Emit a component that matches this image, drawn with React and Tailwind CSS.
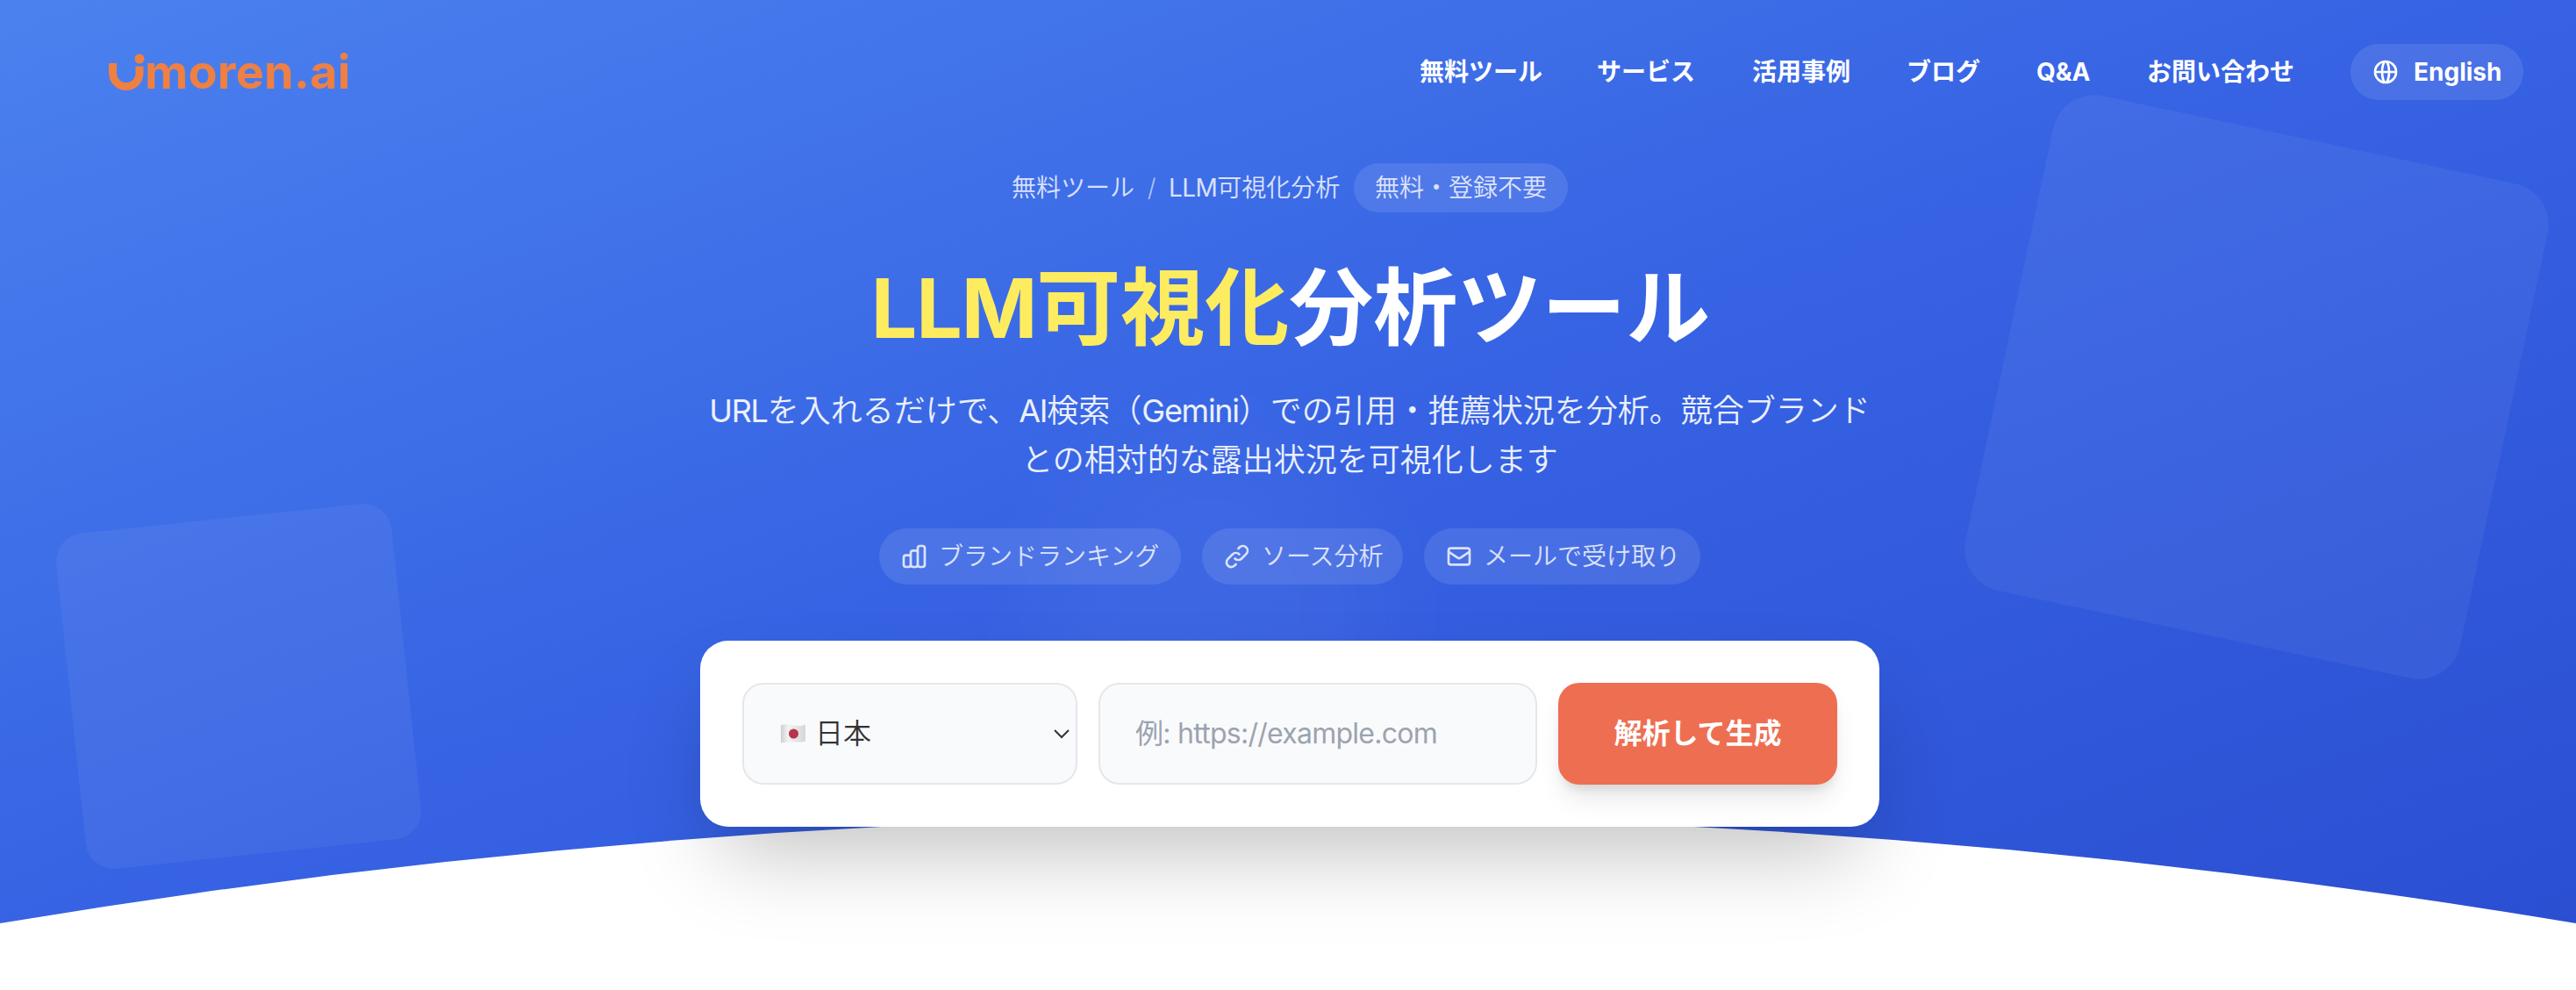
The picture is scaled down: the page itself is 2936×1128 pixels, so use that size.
const NAV_ITEMS = [
  { label: '無料ツール', width: 'w-[138px]' },
  { label: 'サービス', width: 'w-[113px]' },
  { label: '活用事例', width: 'w-[112px]' },
  { label: 'ブログ', width: 'w-[84px]' },
  { label: 'Q&A', width: 'w-[62px]' },
  { label: 'お問い合わせ', width: 'w-[168px]' },
];

const ICONS = {
  globe:
    'M21 12a9 9 0 01-9 9m9-9a9 9 0 00-9-9m9 9H3m9 9a9 9 0 01-9-9m9 9c1.657 0 3-4.03 3-9s-1.343-9-3-9m0 18c-1.657 0-3-4.03-3-9s1.343-9 3-9m-9 9a9 9 0 019-9',
  chart:
    'M9 19v-6a2 2 0 00-2-2H5a2 2 0 00-2 2v6a2 2 0 002 2h2a2 2 0 002-2zm0 0V9a2 2 0 012-2h2a2 2 0 012 2v10m-6 0a2 2 0 002 2h2a2 2 0 002-2m0 0V5a2 2 0 012-2h2a2 2 0 012 2v14a2 2 0 01-2 2h-2a2 2 0 01-2-2z',
  link: 'M13.828 10.172a4 4 0 00-5.656 0l-4 4a4 4 0 105.656 5.656l1.102-1.101m-.758-4.899a4 4 0 005.656 0l4-4a4 4 0 00-5.656-5.656l-1.1 1.1',
  mail: 'M3 8l7.89 5.26a2 2 0 002.22 0L21 8M5 19h14a2 2 0 002-2V7a2 2 0 00-2-2H5a2 2 0 00-2 2v10a2 2 0 002 2z',
};

const FEATURES = [
  { label: 'ブランドランキング', icon: 'chart', width: 'w-[344px]' },
  { label: 'ソース分析', icon: 'link', width: 'w-[229px]' },
  { label: 'メールで受け取り', icon: 'mail', width: 'w-[315px]' },
];

function Icon({ name }) {
  return (
    <svg
      viewBox="0 0 24 24"
      className="size-8 shrink-0"
      fill="none"
      stroke="currentColor"
      strokeWidth="2"
      strokeLinecap="round"
      strokeLinejoin="round"
    >
      <path d={ICONS[name]} />
    </svg>
  );
}

function Logo() {
  return (
    <a href="#" className="flex items-start text-[#ee8043]" aria-label="umoren.ai">
      <svg width="44" height="44" viewBox="0 0 44 44" fill="none" className="shrink-0">
        <path d="M4.500 12V23.300a15.250 15.250 0 0 0 30.500 0V15.500" stroke="currentColor" strokeWidth="9" />
        <circle cx="35" cy="7" r="5.500" fill="currentColor" />
      </svg>
      <span className="-ml-[3px] text-[54px] leading-[44px] font-bold tracking-[0.004em] whitespace-nowrap">
        moren.ai
      </span>
    </a>
  );
}

function Header() {
  return (
    <header className="flex h-[64px] items-center justify-between pr-[60px] pl-[124px]">
      <Logo />
      <nav className="flex items-center gap-16 text-[28px] font-bold">
        {NAV_ITEMS.map((item) => (
          <a key={item.label} href="#" className={`${item.width} whitespace-nowrap`}>
            {item.label}
          </a>
        ))}
        <button className="flex h-[64px] w-[197px] items-center gap-4 rounded-full bg-white/10 px-6">
          <Icon name="globe" />
          <span>English</span>
        </button>
      </nav>
    </header>
  );
}

function Breadcrumb() {
  return (
    <div className="flex items-center text-[28px] font-[350] text-white/80">
      <span className="w-[140px] whitespace-nowrap">無料ツール</span>
      <span className="w-[39px] text-center text-white/60">/</span>
      <span className="w-[195px] whitespace-nowrap">
        <span className="font-normal tracking-[-0.02em]">LLM</span>可視化分析
      </span>
      <span className="ml-4 flex h-14 w-[244px] items-center justify-center rounded-full bg-white/10 whitespace-nowrap">
        無料・登録不要
      </span>
    </div>
  );
}

function JapanFlag() {
  return (
    <svg width="30" height="24" viewBox="0 0 30 24" className="shrink-0">
      <defs>
        <linearGradient id="cloth" x1="0" x2="1" y1="0" y2="0">
          <stop offset="0" stopColor="#cfcfcf" />
          <stop offset="0.300" stopColor="#f3f3f3" />
          <stop offset="0.650" stopColor="#e4e4e4" />
          <stop offset="1" stopColor="#d6d6d6" />
        </linearGradient>
      </defs>
      <path d="M1 2C6 .500 10 1.500 15 2.500S25 3 29 1.500V20.500C25 22 20 21.500 15 21.500S6 21.500 1 22.500Z" fill="url(#cloth)" />
      <circle cx="15.500" cy="12" r="5.500" fill="#b8334c" />
    </svg>
  );
}

function SearchCard() {
  return (
    <form className="flex h-[212px] w-[1344px] gap-6 rounded-[32px] bg-white p-12 text-[32px] shadow-[0_50px_100px_-24px_rgba(0,0,0,0.25)]">
      <button
        type="button"
        className="flex w-[382px] items-center rounded-3xl border-2 border-[#e5e7eb] bg-[#f9fafc] pr-1.5 pl-[41px] font-[350] text-[#333]"
      >
        <JapanFlag />
        <span className="ml-2.5 flex-1 text-left">日本</span>
        <svg width="20" height="12" viewBox="0 0 20 12" fill="none" stroke="#333" strokeWidth="2">
          <path d="M2 2l8 8 8-8" />
        </svg>
      </button>
      <input
        type="text"
        placeholder="例: https://example.com"
        className="w-[500px] rounded-3xl border-2 border-[#e5e7eb] bg-[#f9fafc] px-10 tracking-[-0.023em] placeholder:text-[#9ca3af]"
      />
      <button
        type="button"
        className="flex-1 rounded-3xl bg-[#ee6e52] font-bold whitespace-nowrap text-white shadow-[0_20px_30px_-6px_rgba(0,0,0,0.1),0_8px_12px_-4px_rgba(0,0,0,0.1)]"
      >
        解析して生成
      </button>
    </form>
  );
}

export default function App() {
  return (
    <div className="h-[1128px] w-[2936px] overflow-hidden bg-white font-[Inter,'Noto_Sans_CJK_JP',sans-serif]" lang="ja">
      <section className="relative h-[1092px] bg-linear-to-br/srgb from-[#4b81ef] via-[#3662e3] to-[#2b4ed1] pt-[50px] text-white">
        {/* Decorative shapes */}
        <div className="absolute top-[153px] left-[2284px] size-[576px] rotate-12 rounded-[48px] bg-white/5" />
        <div className="absolute top-[590px] left-[80px] size-[384px] -rotate-6 rounded-[32px] bg-white/5" />
        <div className="absolute top-[500px] left-[1180px] size-[400px] rounded-full bg-white/4 blur-[60px]" />

        {/* Curved bottom edge */}
        <svg
          className="absolute bottom-0 left-0 h-[163px] w-full"
          viewBox="0 0 2936 163"
          preserveAspectRatio="none"
          fill="#fff"
        >
          <path d="M0 123Q1468-121.300 2936 123V163H0Z" />
        </svg>

        <div className="relative">
          <Header />
          <main className="mt-[72px] flex flex-col items-center pl-1">
            <Breadcrumb />
            <h1 className="mt-[48px] ml-0.5 h-[120px] text-[96px] leading-[120px] font-bold whitespace-nowrap">
              <span className="text-[#fdec5f]">
                <span className="text-[93px] tracking-[-0.012em]">LLM</span>可視化
              </span>
              分析ツール
            </h1>
            <p className="mt-[30px] h-[112px] text-center text-[36px] leading-[56px] font-[350] whitespace-nowrap text-white/90">
              <span className="font-normal tracking-[-0.035em]">URL</span>を入れるだけで、
              <span className="font-normal tracking-[-0.035em]">AI</span>検索（
              <span className="font-normal tracking-[-0.035em]">Gemini</span>
              ）での引用・推薦状況を分析。競合ブランド
              <br />
              との相対的な露出状況を可視化します
            </p>
            <div className="mt-[50px] mb-16 flex gap-6 text-[28px] font-[350] text-white/80">
              {FEATURES.map((feature) => (
                <div
                  key={feature.label}
                  className={`${feature.width} flex h-16 items-center gap-3 rounded-full bg-white/10 px-6 whitespace-nowrap`}
                >
                  <Icon name={feature.icon} />
                  {feature.label}
                </div>
              ))}
            </div>
            <SearchCard />
          </main>
        </div>
      </section>
    </div>
  );
}
